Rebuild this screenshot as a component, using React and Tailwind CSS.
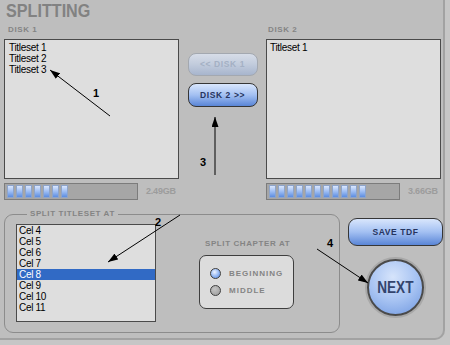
import React from "react";

const LABEL = "text-[8px] leading-[10px] font-bold tracking-[0.6px] text-[#848484]";
const LIST_TEXT = "text-[10px] leading-[11px] tracking-[-0.3px] text-black";

function ListBox({ items, selected, className = "" }) {
  return (
    <div className={`bg-[#dedede] border border-[#4a4a4a] ${className}`}>
      {items.map((it) => (
        <div
          key={it}
          className={`${LIST_TEXT} h-[11px] pl-[2px] ${
            it === selected ? "bg-[#316ac5] text-white" : ""
          }`}
        >
          {it}
        </div>
      ))}
    </div>
  );
}

function Meter({ filled, size }) {
  return (
    <div className="flex items-center gap-[8px]">
      <div className="w-[134px] h-[17px] border border-[#7c7c7c] bg-[#a6a6a6] flex items-center gap-[2px] pl-[2px]">
        {Array.from({ length: filled }).map((_, i) => (
          <div
            key={i}
            className="w-[7px] h-[13px] border border-[#8ea4c9] bg-gradient-to-b from-[#dbe7fd] via-[#9dbdf3] to-[#5d8de0]"
          />
        ))}
      </div>
      <span className="text-[9px] font-bold text-[#9c9c9c] tracking-[-0.2px]">{size}</span>
    </div>
  );
}

function PillButton({ children, disabled, className = "" }) {
  return (
    <div
      className={`flex items-center justify-center rounded-[8px] border-[1.5px] ${
        disabled
          ? "border-[#a3a8b0] bg-gradient-to-b from-[#d7dde8] via-[#c1cbdc] to-[#a7b5cd] text-[#a4b0c4]"
          : "border-[#363636] bg-gradient-to-b from-[#d9e6fc] via-[#a3c0f2] to-[#5a85d6] text-[#26345e]"
      } ${className}`}
    >
      <span className="text-[8.5px] font-bold tracking-[0.6px]">{children}</span>
    </div>
  );
}

function Radio({ on, label }) {
  return (
    <div className="flex items-center gap-[8px] h-[17px]">
      <div
        className={`w-[11px] h-[11px] rounded-full border border-[#3e3e3e] ${
          on
            ? "bg-[radial-gradient(circle_at_40%_35%,#eef4ff,#8fb4f2_55%,#5b88dc)]"
            : "bg-[radial-gradient(circle_at_40%_35%,#c4c4c4,#9a9a9a)]"
        }`}
      />
      <span className="text-[8px] font-bold tracking-[1px] text-[#848484]">{label}</span>
    </div>
  );
}

function Arrows() {
  return (
    <svg className="absolute inset-0 pointer-events-none" width="450" height="345">
      <defs>
        <marker
          id="ah"
          viewBox="0 0 10 10"
          refX="10"
          refY="5"
          markerWidth="10"
          markerHeight="7"
          markerUnits="userSpaceOnUse"
          orient="auto"
          preserveAspectRatio="none"
        >
          <path d="M0,0 L10,5 L0,10 z" fill="#000" />
        </marker>
      </defs>
      <g stroke="#000" strokeWidth="1" markerEnd="url(#ah)">
        <line x1="110" y1="116" x2="50" y2="70" />
        <line x1="180" y1="215" x2="108" y2="262" />
        <line x1="215" y1="175" x2="215" y2="117" />
        <line x1="317" y1="249" x2="368" y2="283" />
      </g>
      <g fontFamily="'Liberation Sans', Arial, sans-serif" fontWeight="bold" fontSize="11" fill="#000">
        <text x="93" y="97">1</text>
        <text x="155" y="226">2</text>
        <text x="200" y="166">3</text>
        <text x="327" y="247">4</text>
      </g>
    </svg>
  );
}

export default function App() {
  return (
    <div className="relative w-[450px] h-[345px] overflow-hidden bg-[#c6c6c6] font-['Liberation_Sans',Arial,sans-serif]">
      <div className="w-[445px] h-[340px] bg-[#bebebe] border-r-2 border-b-2 border-[#a2a2a2] rounded-br-[10px] pl-[4px]">
        {/* Title */}
        <div className="h-[25px] pl-[2px]">
          <span className="inline-block origin-left scale-x-[0.85] text-[19px] leading-[20px] font-bold text-[#828282]">
            SPLITTING
          </span>
        </div>

        {/* Disks */}
        <div className="flex">
          <div className="w-[175px]">
            <div className={`${LABEL} pl-[4px] h-[14px]`}>DISK 1</div>
            <ListBox
              items={["Titleset 1", "Titleset 2", "Titleset 3"]}
              className="h-[140px] pt-[2px] pl-[2px]"
            />
            <div className="mt-[4px]">
              <Meter filled={7} size="2.49GB" />
            </div>
          </div>

          <div className="w-[87px] flex flex-col items-center pt-[28px] gap-[7px]">
            <PillButton disabled className="w-[70px] h-[23px]">
              &lt;&lt; DISK 1
            </PillButton>
            <PillButton className="w-[70px] h-[24px]">DISK 2 &gt;&gt;</PillButton>
          </div>

          <div className="w-[175px]">
            <div className={`${LABEL} pl-[2px] h-[14px]`}>DISK 2</div>
            <ListBox items={["Titleset 1"]} className="h-[140px] pt-[2px] pl-[1px]" />
            <div className="mt-[4px]">
              <Meter filled={11} size="3.66GB" />
            </div>
          </div>
        </div>

        {/* Bottom */}
        <div className="flex mt-[9px]">
          <fieldset className="w-[337px] h-[124px] border border-[#8c8c8c] rounded-[9px] pl-[11px] flex">
            <legend className={`${LABEL} ml-[11px] px-[3px]`}>SPLIT TITLESET AT</legend>
            <ListBox
              items={["Cel 4", "Cel 5", "Cel 6", "Cel 7", "Cel 8", "Cel 9", "Cel 10", "Cel 11"]}
              selected="Cel 8"
              className="w-[140px] h-[98px] mt-[5px]"
            />
            <div className="ml-[43px] mt-[20px]">
              <div className={`${LABEL} pl-[6px] h-[16px]`}>SPLIT CHAPTER AT</div>
              <div className="w-[95px] h-[54px] rounded-[7px] border border-[#3e3e3e] bg-[#dcdcdc] pl-[10px] pt-[9px]">
                <Radio on label="BEGINNING" />
                <Radio label="MIDDLE" />
              </div>
            </div>
          </fieldset>

          <div className="flex flex-col items-center ml-[8px] pt-[9px] w-[95px]">
            <PillButton className="w-[95px] h-[28px] rounded-[9px]">SAVE TDF</PillButton>
            <div className="mt-[13px] w-[57px] h-[57px] rounded-full border-2 border-[#4a4a4a] shadow-[0_0_0_2px_#a8a8a8] bg-[radial-gradient(circle_at_45%_30%,#d6e4fb,#a7c3f2_50%,#6e97e0)] flex items-center justify-center">
              <span className="inline-block scale-x-[0.85] text-[16px] font-bold text-[#33446d]">NEXT</span>
            </div>
          </div>
        </div>
      </div>
      <Arrows />
    </div>
  );
}
